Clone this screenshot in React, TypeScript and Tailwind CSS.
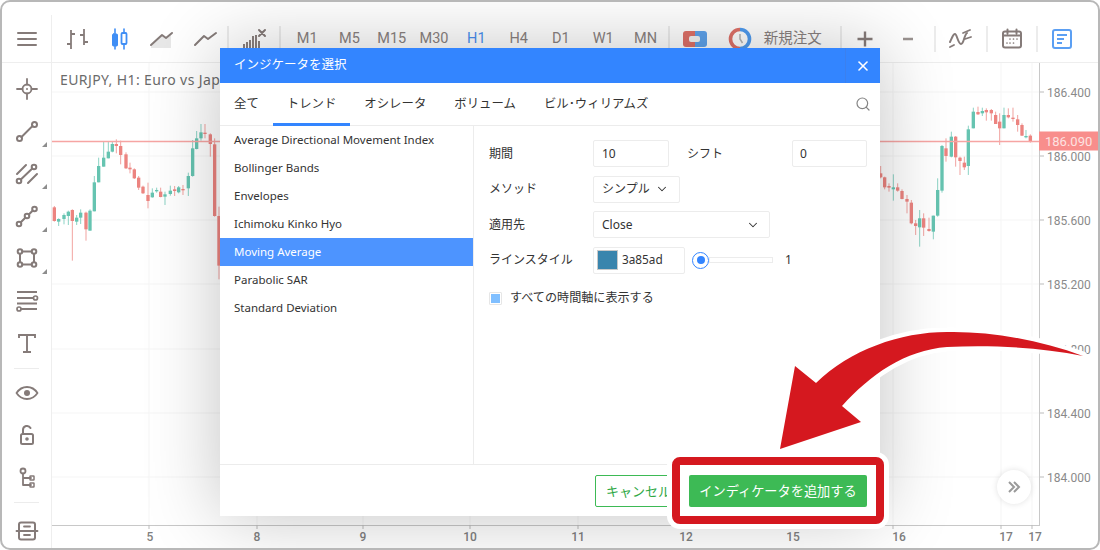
import React from 'react';
import { ChevronDown, X, Search } from 'lucide-react';

// candle: x, wick top, wick bottom, body top, body bottom (zoomed crop coords), g = green
type C = [number, number, number, number, number, 0 | 1];

const leftCandles: C[] = [
  [43, 258, 305, 262, 303, 0], [56, 295, 318, 297, 305, 1], [72, 280, 313, 285, 297, 1], [85, 272, 315, 275, 288, 1],
  [97, 268, 422, 270, 303, 0], [110, 285, 315, 293, 305, 1], [122, 268, 312, 278, 293, 1], [138, 275, 362, 278, 328, 0],
  [150, 268, 332, 272, 332, 1], [163, 168, 274, 187, 274, 1], [176, 113, 187, 138, 187, 1], [191, 65, 140, 113, 140, 1],
  [205, 65, 115, 95, 115, 1], [217, 65, 97, 72, 95, 1], [229, 58, 100, 72, 78, 0], [242, 62, 133, 78, 105, 0],
  [258, 97, 147, 103, 145, 0], [270, 128, 160, 143, 148, 0], [283, 145, 177, 148, 175, 0], [296, 168, 210, 173, 203, 0],
  [309, 197, 222, 200, 220, 0], [324, 188, 265, 225, 243, 0], [337, 205, 233, 218, 232, 1], [350, 203, 218, 210, 213, 1],
  [362, 203, 232, 215, 231, 0], [375, 215, 255, 223, 230, 1], [391, 197, 227, 212, 222, 1], [404, 198, 228, 208, 213, 0],
  [416, 198, 220, 202, 217, 1], [429, 195, 225, 207, 210, 0], [445, 158, 228, 168, 205, 1], [458, 60, 170, 85, 168, 1],
  [470, 33, 88, 55, 87, 1], [483, 12, 62, 37, 55, 1], [495, 12, 55, 38, 42, 0], [511, 40, 110, 43, 72, 0],
  [524, 55, 290, 73, 288, 0], [537, 260, 478, 288, 437, 0],
];

const rightCandles: C[] = [
  [32, 318, 355, 340, 352, 0], [44, 350, 388, 352, 382, 0], [57, 370, 395, 378, 383, 0], [70, 343, 422, 382, 388, 1],
  [83, 370, 395, 382, 392, 0], [96, 388, 418, 393, 417, 0], [111, 405, 460, 417, 425, 0], [124, 420, 493, 428, 490, 0],
  [137, 480, 525, 490, 498, 0], [149, 450, 560, 475, 502, 1], [161, 460, 528, 475, 503, 0], [177, 473, 515, 507, 513, 0],
  [190, 467, 538, 467, 515, 1], [203, 355, 470, 390, 467, 1], [216, 255, 398, 258, 392, 1], [228, 235, 305, 265, 288, 0],
  [244, 215, 292, 230, 290, 1], [257, 228, 320, 230, 292, 0], [270, 290, 345, 293, 303, 0], [283, 290, 330, 308, 322, 0],
  [295, 197, 345, 208, 318, 1], [310, 143, 205, 155, 205, 1], [324, 140, 165, 156, 163, 0], [337, 143, 168, 153, 160, 1],
  [349, 145, 182, 150, 157, 0], [364, 147, 182, 150, 160, 0], [377, 155, 192, 165, 192, 0], [389, 160, 255, 185, 205, 0],
  [402, 143, 205, 165, 205, 1], [415, 145, 175, 165, 172, 0], [429, 143, 185, 173, 177, 0], [443, 165, 215, 178, 195, 0],
  [456, 190, 228, 195, 227, 0], [468, 210, 235, 228, 232, 1], [481, 223, 248, 227, 245, 0],
];

const Candles = ({ data, ox, oy }: { data: C[]; ox: number; oy: number }) => (
  <g transform={`translate(${ox} ${oy}) scale(0.3333)`}>
    {data.map(([x, wt, wb, bt, bb, g], i) => (
      <g key={i} fill={g ? '#66c4b1' : '#ec8480'}>
        <rect x={x - 1.5} y={wt} width={3} height={wb - wt} opacity={0.75} />
        <rect x={x - 5} y={bt} width={10} height={Math.max(bb - bt, 4)} />
      </g>
    ))}
  </g>
);

const prices: [number, string][] = [
  [92, '186.400'], [156, '186.000'], [220, '185.600'], [284, '185.200'], [349, '184.800'], [413, '184.400'], [477, '184.000'],
];
const times: [number, number, string][] = [
  [149, 150, '5'], [257, 257, '8'], [363, 363, '9'], [470, 470, '10'], [578, 578, '11'], [686, 686, '12'],
  [793, 793, '15'], [893, 899, '16'], [1001, 1006, '17'], [1032, 1035, '17'],
];

const Chart = () => (
  <svg viewBox="52 63 1046 485" className="absolute inset-0 w-full h-full">
    {prices.map(([y]) => (
      <line key={y} x1={52} x2={1039} y1={y} y2={y} stroke="#f5f5f5" />
    ))}
    {times.map(([x], i) => (
      <line key={i} x1={x} x2={x} y1={63} y2={525} stroke="#f5f5f5" />
    ))}
    <Candles data={leftCandles} ox={40} oy={120} />
    <Candles data={rightCandles} ox={870} oy={60} />
    <line x1={52} x2={1040} y1={141.5} y2={141.5} stroke="#f6a5a3" strokeWidth={1.4} />
    <line x1={1039.5} x2={1039.5} y1={63} y2={526} stroke="#c8c8c8" />
    <line x1={52} x2={1040} y1={525.5} y2={525.5} stroke="#c8c8c8" />
    {prices.map(([y, p]) => (
      <g key={p}>
        <line x1={1040} x2={1044} y1={y} y2={y} stroke="#bbb" />
        <text x={1047} y={y + 4.5} fontSize={12} fill="#8a8a8a" className="font-['Roboto']">{p}</text>
      </g>
    ))}
    <rect x={1039} y={131.5} width={59} height={19} fill="#f88e8c" />
    <text x={1045} y={145.5} fontSize={13} fill="#fde2e1" className="font-['Roboto']">186.090</text>
    {times.map(([x, lx, t], i) => (
      <g key={i}>
        <line x1={x} x2={x} y1={525} y2={529} stroke="#bbb" />
        <text x={lx} y={541} fontSize={12} fontWeight={500} textAnchor="middle" fill="#808080" className="font-['Roboto']">{t}</text>
      </g>
    ))}
  </svg>
);

const Ico = ({ children, w = 30, h = 30, className = '' }: { children: React.ReactNode; w?: number; h?: number; className?: string }) => (
  <svg width={w} height={h} viewBox={`0 0 ${w} ${h}`} fill="none" stroke="#857b79" strokeWidth={2} strokeLinecap="round" strokeLinejoin="round" className={className}>
    {children}
  </svg>
);

const TbItem = ({ w, children }: { w: string; children: React.ReactNode }) => (
  <div className={`${w} h-[30px] shrink-0 flex items-center justify-center`}>{children}</div>
);

const TbDivider = () => <div className="w-[2px] h-[26px] shrink-0 bg-[#ececec]" />;

const Toolbar = () => (
  <div className="h-[61px] shrink-0 flex items-center pt-[13px] border-b border-[#eeeeee]">
    <div className="w-[50px] h-[47px] shrink-0 flex items-center justify-center border-r border-[#eeeeee]">
      <Ico w={22} h={18}>
        <path d="M2 3h18M2 9h18M2 15h18" />
      </Ico>
    </div>
    <div className="w-[3px] shrink-0" />
    <TbItem w="w-[43px]">
      <Ico>
        <path d="M9 6v19M5 20h4M9 10h4M22 5v16M18 11h4M22 18h4" strokeWidth={1.8} strokeLinecap="butt" />
      </Ico>
    </TbItem>
    <TbItem w="w-[43px]">
      <Ico>
        <path d="M10 5v20M19 5v20" stroke="#3f8ef5" strokeWidth={1.6} />
        <rect x={7.5} y={10} width={5} height={12} rx={1} fill="#3f8ef5" stroke="#3f8ef5" strokeWidth={1} />
        <rect x={16.5} y={9} width={5} height={11} rx={1} fill="#fff" stroke="#3f8ef5" strokeWidth={1.8} />
      </Ico>
    </TbItem>
    <TbItem w="w-[43px]">
      <Ico>
        <path d="M3 22l11-10 4 3 5-5v14H3z" fill="#e8e8e8" stroke="none" />
        <path d="M3 21l11-10 4 3 6-5" />
      </Ico>
    </TbItem>
    <TbItem w="w-[43px]">
      <Ico>
        <path d="M4 21l9-9 4 3 8-6" />
      </Ico>
    </TbItem>
    <TbDivider />
    <TbItem w="w-[50px]">
      <Ico w={32}>
        <path d="M6 20v4M9 18v6M12 16v8M15 12v12M18 11v13M21 17v7" strokeWidth={1.9} strokeLinecap="butt" />
        <path d="M21 6l6 6M27 6l-6 6" strokeWidth={2} />
      </Ico>
    </TbItem>
    <TbDivider />
    <div className="w-[5px] shrink-0" />
    <div className="flex shrink-0 font-['Roboto'] text-[14.5px] text-[#8a8280]">
      {['M1', 'M5', 'M15', 'M30', 'H1', 'H4', 'D1', 'W1', 'MN'].map((t) => (
        <span key={t} className={`w-[42.3px] flex items-center justify-center ${t === 'H1' ? 'text-[#4a90f0]' : ''}`}>
          {t}
        </span>
      ))}
    </div>
    <div className="w-[1px] shrink-0" />
    <TbDivider />
    <TbItem w="w-[51px]">
      <svg width={24} height={16} viewBox="0 0 24 16">
        <path d="M3 0h9v16H3a3 3 0 0 1-3-3V3a3 3 0 0 1 3-3z" fill="#df7168" />
        <path d="M12 0h9a3 3 0 0 1 3 3v10a3 3 0 0 1-3 3h-9z" fill="#5fa3ec" />
        <rect x={6} y={5} width={11} height={6} rx={2} fill="#f4f4f4" />
      </svg>
    </TbItem>
    <TbItem w="w-[39px]">
      <svg width={24} height={24} viewBox="0 0 24 24" fill="none">
        <path d="M12 2.500a9.500 9.500 0 0 0 0 19" stroke="#df7168" strokeWidth={3.6} />
        <path d="M12 2.500a9.500 9.500 0 0 1 0 19" stroke="#4f9bef" strokeWidth={3.6} />
        <path d="M12 7v5l2.500 4" stroke="#b5b5b5" strokeWidth={1.500} />
      </svg>
    </TbItem>
    <span className="w-[80px] shrink-0 pl-[4px] text-[14.5px] text-[#8a8280] leading-none pb-[3px]">新規注文</span>
    <TbDivider />
    <TbItem w="w-[46px]">
      <Ico w={18} h={18}>
        <path d="M9 1.500v15M1.500 9h15" strokeWidth={2.400} strokeLinecap="butt" />
      </Ico>
    </TbItem>
    <TbItem w="w-[40px]">
      <Ico w={14} h={14}>
        <path d="M2 7h10" strokeWidth={2.400} stroke="#9a9290" strokeLinecap="butt" />
      </Ico>
    </TbItem>
    <div className="w-[6px] shrink-0" />
    <TbDivider />
    <TbItem w="w-[50px]">
      <Ico w={26} h={24}>
        <path d="M2 15c2-4 3-8 5-8s3 10 6 10 3-9 6-11" />
        <path d="M2 20l4-2M15 6l7-3M17 12l6-2" strokeWidth={1.800} />
      </Ico>
    </TbItem>
    <TbDivider />
    <TbItem w="w-[48px]">
      <Ico w={22} h={22}>
        <rect x={2} y={3.500} width={18} height={16} rx={2} />
        <path d="M6.500 1.500v4M15.500 1.500v4M2 7.500h18" />
        <path d="M9 11h0M12.500 11h0M16 11h0M6 15h0M9 15h0M12.500 15h0" strokeWidth={1.700} />
      </Ico>
    </TbItem>
    <TbDivider />
    <TbItem w="w-[48px]">
      <Ico w={22} h={22}>
        <rect x={2} y={2} width={18} height={18} rx={2} stroke="#5b9ff3" strokeWidth={2} />
        <path d="M6 7h10M6 11h7M6 15h5" stroke="#5b9ff3" strokeWidth={2} strokeLinecap="butt" />
      </Ico>
    </TbItem>
  </div>
);

const Corner = () => (
  <svg width={5} height={5} viewBox="0 0 5 5" className="absolute right-[4px] bottom-[6px]">
    <path d="M5 0v5H0z" fill="#8d8d8d" />
  </svg>
);

const SideItem = ({ children, corner }: { children: React.ReactNode; corner?: boolean }) => (
  <div className="relative h-[42.4px] flex items-center justify-center">
    {children}
    {corner && <Corner />}
  </div>
);

const SideDivider = () => <div className="h-[1px] mx-[12px] bg-[#ececec]" />;

const Sidebar = () => (
  <div className="w-[50px] shrink-0 border-r border-[#eeeeee] pt-[5px]">
    <SideItem>
      <Ico>
        <circle cx={15} cy={15} r={4.500} strokeWidth={1.800} />
        <circle cx={15} cy={15} r={1} fill="#857b79" stroke="none" />
        <path d="M15 5v5.500M15 19.500V25M5 15h5.500M19.500 15H25" strokeWidth={1.800} />
      </Ico>
    </SideItem>
    <SideItem corner>
      <Ico>
        <circle cx={7.500} cy={21.500} r={2.500} />
        <circle cx={22.500} cy={7.500} r={2.500} />
        <path d="M9.500 20l11-11" />
      </Ico>
    </SideItem>
    <SideItem corner>
      <Ico>
        <circle cx={7} cy={22} r={2.300} />
        <circle cx={22} cy={8} r={2.300} />
        <path d="M8.800 20.500l11.500-11M5 15l9-9M16 24l9-9" />
      </Ico>
    </SideItem>
    <SideItem corner>
      <Ico>
        <circle cx={7} cy={23} r={2.300} />
        <circle cx={15} cy={15} r={2.300} />
        <circle cx={22.500} cy={8} r={2.300} />
        <path d="M8.800 21.300l4.500-4.500M16.800 13.500l4-4" />
      </Ico>
    </SideItem>
    <SideItem corner>
      <Ico>
        <circle cx={8} cy={7.500} r={2.300} />
        <circle cx={22} cy={7.500} r={2.300} />
        <circle cx={8} cy={20.500} r={2.300} />
        <circle cx={22} cy={20.500} r={2.300} />
        <path d="M10.300 7.500h9.400M10.300 20.500h9.400M8 9.800v8.400M22 9.800v8.400" />
      </Ico>
    </SideItem>
    <SideItem>
      <Ico>
        <circle cx={23.500} cy={12} r={2} strokeWidth={1.700} />
        <circle cx={7} cy={23} r={2} strokeWidth={1.700} />
        <path d="M5 6h20M5 12h16.500M5 17.500h20M9 23h16" strokeWidth={1.800} strokeLinecap="butt" />
      </Ico>
    </SideItem>
    <SideItem>
      <Ico>
        <path d="M7 9V6h16v3M15 6v17M11 23h8" strokeWidth={1.900} strokeLinecap="butt" strokeLinejoin="miter" />
      </Ico>
    </SideItem>
    <div className="h-[3px]" />
    <SideDivider />
    <div className="h-[3px]" />
    <SideItem>
      <Ico>
        <path d="M4.500 15c3-4.500 6.500-6 10.500-6s7.500 1.500 10.500 6c-3 4.500-6.500 6-10.500 6s-7.500-1.500-10.500-6z" strokeWidth={1.800} />
        <circle cx={15} cy={15} r={3} fill="#857b79" stroke="none" />
      </Ico>
    </SideItem>
    <SideItem>
      <Ico>
        <rect x={9} y={14} width={12} height={10} rx={1.500} />
        <path d="M11 14v-4a4 4 0 0 1 7.500-2" />
        <circle cx={15} cy={19} r={0.800} fill="#857b79" />
      </Ico>
    </SideItem>
    <SideItem>
      <Ico>
        <circle cx={11} cy={8} r={2.500} strokeWidth={1.800} />
        <path d="M11 10.500V22h8M11 15h8" strokeWidth={1.800} />
        <rect x={18} y={13} width={4} height={4} rx={0.500} strokeWidth={1.500} />
        <rect x={18} y={20} width={4} height={4} rx={0.500} strokeWidth={1.500} />
      </Ico>
    </SideItem>
    <div className="h-[3px]" />
    <SideDivider />
    <div className="h-[17px]" />
    <div className="flex items-center justify-center">
      <Ico w={24} h={22}>
        <rect x={4} y={2.500} width={16} height={17} rx={2} />
        <path d="M1.500 11h21M9 6.500h6M9 15h6" strokeWidth={1.800} />
      </Ico>
    </div>
  </div>
);

const indicators = [
  'Average Directional Movement Index',
  'Bollinger Bands',
  'Envelopes',
  'Ichimoku Kinko Hyo',
  'Moving Average',
  'Parabolic SAR',
  'Standard Deviation',
];

const Field = ({ className, children }: { className: string; children: React.ReactNode }) => (
  <div className={`h-[27px] shrink-0 flex items-center border border-[#ececec] rounded-[2px] bg-white ${className}`}>{children}</div>
);

const Label = ({ className = 'w-[104px]', children }: { className?: string; children: React.ReactNode }) => (
  <span className={`shrink-0 ${className}`}>{children}</span>
);

const Dialog = () => (
  <div className="absolute left-[218px] top-[46px] w-[660px] h-[468px] flex flex-col bg-white shadow-[0_0_70px_rgba(0,0,0,0.24)] text-[#333333]">
    <div className="h-[35px] shrink-0 flex items-center justify-between bg-[#3385ff] text-white">
      <span className="pl-[14px] text-[12.5px]">インジケータを選択</span>
      <div className="w-[35px] h-full flex items-center justify-center border-l border-[#3b80ee]">
        <X size={16} strokeWidth={2.400} />
      </div>
    </div>
    <div className="h-[43px] shrink-0 flex items-stretch border-b border-[#ececec] text-[12.4px]">
      {['全て', 'トレンド', 'オシレータ', 'ボリューム', 'ビル･ウィリアムズ'].map((t) => (
        <span
          key={t}
          className={`px-[14px] pt-[2px] flex items-center border-b-[3px] -mb-[1px] ${t === 'トレンド' ? 'border-[#3385ff]' : 'border-transparent'}`}
        >
          {t}
        </span>
      ))}
      <div className="ml-auto pr-[9px] flex items-center text-[#858585]">
        <Search size={16} strokeWidth={1.800} />
      </div>
    </div>
    <div className="flex-1 min-h-0 flex border-b border-[#ececec]">
      <div className="w-[254px] shrink-0 border-r border-[#ececec] text-[11.5px]">
        {indicators.map((t) => (
          <div key={t} className={`h-[28px] pl-[14px] flex items-center ${t === 'Moving Average' ? 'bg-[#4d94ff] text-white' : ''}`}>
            {t}
          </div>
        ))}
      </div>
      <div className="flex-1 pl-[15px] pt-[14px] text-[12px] flex flex-col gap-[8.500px]">
        <div className="flex items-center">
          <Label>期間</Label>
          <Field className="w-[76px] pl-[8px]">10</Field>
          <Label className="w-[123px] pl-[18px]">シフト</Label>
          <Field className="w-[75px] pl-[7px]">0</Field>
        </div>
        <div className="flex items-center">
          <Label>メソッド</Label>
          <Field className="w-[87px] pl-[8px] justify-between pr-[10px]">
            シンプル
            <ChevronDown size={14} strokeWidth={1.800} />
          </Field>
        </div>
        <div className="flex items-center">
          <Label>適用先</Label>
          <Field className="w-[177px] pl-[8px] justify-between pr-[9px]">
            Close
            <ChevronDown size={14} strokeWidth={1.800} />
          </Field>
        </div>
        <div className="flex items-center">
          <Label>ラインスタイル</Label>
          <Field className="w-[92px] pl-[3px] gap-[4px] text-[11.800px]">
            <div className="w-[21px] h-[20px] bg-[#3a85ad] border border-[#c9c9c9]" />
            3a85ad
          </Field>
          <div className="ml-[7px] w-[17px] h-[17px] shrink-0 rounded-full border border-[#3385ff] bg-white flex items-center justify-center">
            <div className="w-[8px] h-[8px] rounded-full bg-[#3385ff]" />
          </div>
          <div className="w-[64px] h-[6px] border border-[#ececec]" />
          <span className="ml-[12px]">1</span>
        </div>
        <div className="mt-[7px] flex items-center">
          <div className="w-[13px] h-[13px] shrink-0 border border-[#e6e6e6] rounded-[1px] flex items-center justify-center">
            <div className="w-[9px] h-[9px] bg-[#80bfff]" />
          </div>
          <span className="ml-[8px] text-[12.1px]">すべての時間軸に表示する</span>
        </div>
      </div>
    </div>
    <div className="h-[51px] shrink-0 flex items-center justify-end gap-[10px] pr-[13px]">
      <button className="w-[84px] h-[32px] pl-[10px] pt-[2px] text-left text-[13px] border border-[#3dba55] rounded-[2px] text-[#2fa845] whitespace-nowrap overflow-hidden">
        キャンセル
      </button>
      <button className="w-[178px] h-[32px] pt-[2px] text-[13.200px] bg-[#3dba55] rounded-[2px] text-white">インディケータを追加する</button>
    </div>
  </div>
);

const Callout = () => (
  <>
    <div className="absolute left-[670px] top-[455px] w-[212px] h-[67px] border-[8px] border-[#d5181f] rounded-[8px] shadow-[0_0_0_5px_#ffffff]" />
    <svg viewBox="0 0 1100 550" className="absolute -left-[2px] -top-[2px] w-[1100px] h-[550px] pointer-events-none">
      <path
        d="M780 449L795 366L816 383C850 350 900 332 947 332C990 331 1040 340 1083 356C1040 347 990 345 947 347C905 350 870 375 842 406L861 422Z"
        fill="#d5181f"
        stroke="#ffffff"
        strokeWidth={9}
        strokeLinejoin="round"
        paintOrder="stroke"
      />
    </svg>
  </>
);

const App: React.FC = () => {
  return (
    <div className="relative w-[1100px] h-[550px] overflow-hidden flex flex-col bg-white rounded-[10px] border-2 border-[#b8b8b8] font-['Noto_Sans','Noto_Sans_CJK_JP',sans-serif]">
      <Toolbar />
      <div className="flex-1 min-h-0 flex">
        <Sidebar />
        <div className="relative flex-1">
          <Chart />
          <span className="absolute left-[8px] top-[6px] text-[14px] tracking-[0.4px] text-[#6b6b6b] whitespace-nowrap">EURJPY, H1: Euro vs Japanese Yen</span>
          <button className="absolute left-[945px] top-[407px] w-[34px] h-[34px] rounded-full bg-white shadow-[0_0_6px_rgba(0,0,0,0.12)] flex items-center justify-center">
            <svg width={14} height={14} viewBox="0 0 14 14" fill="none" stroke="#9a9a9a" strokeWidth={2}>
              <path d="M2 2l5 5-5 5M7 2l5 5-5 5" />
            </svg>
          </button>
        </div>
      </div>
      <Dialog />
      <Callout />
    </div>
  );
};

export default App;
